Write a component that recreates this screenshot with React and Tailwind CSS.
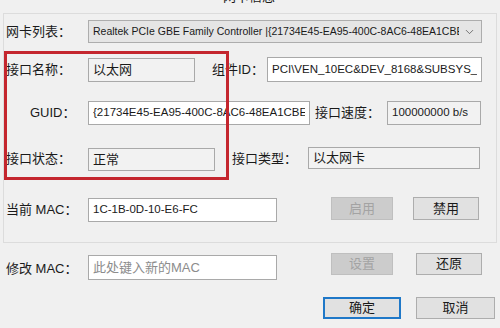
import { ChevronDown } from "lucide-react";

const font = { fontFamily: '"Liberation Sans", "Noto Sans CJK SC", sans-serif' };

function Label({ children, className = "" }) {
  return (
    <div className={`flex shrink-0 items-center h-full text-[13px] text-[#1a1a1a] whitespace-nowrap ${className}`}>
      {children}
    </div>
  );
}

function Field({ children, className = "", gray = false, muted = false }) {
  return (
    <div
      className={`flex shrink-0 items-center px-[4px] border border-[#a9a9a9] overflow-hidden ${
        gray ? "bg-[#f2f2f2]" : "bg-white"
      } ${muted ? "text-[#8c8c8c]" : "text-[#1a1a1a]"} ${className}`}
    >
      <span className="block min-w-0 overflow-hidden whitespace-nowrap">{children}</span>
    </div>
  );
}

function Button({ children, className = "", disabled = false, primary = false }) {
  return (
    <div
      className={`flex shrink-0 items-center justify-center text-[13px] ${
        disabled
          ? "bg-[#cccccc] border border-[#bfbfbf] text-[#a3a3a3]"
          : primary
          ? "bg-[#e1e1e1] border-2 border-[#1f78c8] text-[#1a1a1a]"
          : "bg-[#e1e1e1] border border-[#adadad] text-[#1a1a1a]"
      } ${className}`}
    >
      {children}
    </div>
  );
}

export default function App() {
  return (
    <div className="relative w-[500px] h-[328px] bg-[#f0f0f0] overflow-hidden" style={font}>
      {/* group box */}
      <div className="relative mt-[13px] ml-[3px] w-[494px] h-[230px] border border-[#dcdcdc]">
        <div className="absolute left-[219px] top-[-27px] text-[13px] text-[#1a1a1a]">网卡信息</div>

        {/* 网卡列表 */}
        <div className="flex h-[23px] mt-[6px]">
          <Label className="w-[84px] pl-[2px]">网卡列表：</Label>
          <div className="relative flex shrink-0 items-center w-[394px] h-full pl-[4px] pr-[22px] bg-[#e5e5e5] border border-[#adadad]">
            <span className="block min-w-0 overflow-hidden whitespace-nowrap text-[10.5px] text-[#1a1a1a]">
              Realtek PCIe GBE Family Controller |{"{"}21734E45-EA95-400C-8AC6-48EA1CBE{"}"}
            </span>
            <ChevronDown size={13} strokeWidth={1.3} className="absolute right-[5px] top-1/2 -translate-y-1/2 text-[#444]" />
          </div>
        </div>

        {/* 接口名称 / 组件ID */}
        <div className="flex h-[25px] mt-[14px]">
          <Label className="w-[84px] pl-[2px]">接口名称：</Label>
          <Field gray className="w-[107px] h-[24px] self-end text-[13px]">以太网</Field>
          <Label className="ml-[17px] w-[55px]">组件ID：</Label>
          <Field className="w-[215px] h-full text-[11.5px]">PCI\VEN_10EC&amp;DEV_8168&amp;SUBSYS_E0001458&amp;REV_06</Field>
        </div>

        {/* GUID / 接口速度 */}
        <div className="flex h-[24px] mt-[19px]">
          <Label className="w-[84px] pl-[26px]">GUID：</Label>
          <Field className="w-[222px] h-full text-[11.5px]">{"{"}21734E45-EA95-400C-8AC6-48EA1CBEF{"}"}</Field>
          <Label className="ml-[5px] w-[72px]">接口速度：</Label>
          <Field gray className="w-[94px] h-full text-[11.5px]">100000000 b/s</Field>
        </div>

        {/* 接口状态 / 接口类型 */}
        <div className="flex h-[24px] mt-[22px]">
          <Label className="w-[84px] pl-[2px]">接口状态：</Label>
          <Field gray className="w-[127px] h-[23px] self-end text-[13px]">正常</Field>
          <Label className="ml-[17px] w-[76px]">接口类型：</Label>
          <Field gray className="w-[172px] h-[22px] text-[13px]">以太网卡</Field>
        </div>

        {/* 当前 MAC */}
        <div className="flex h-[25px] mt-[26px]">
          <Label className="w-[84px] pl-[2px]">当前 MAC：</Label>
          <Field className="w-[189px] h-[24px] self-end text-[11.5px]">1C-1B-0D-10-E6-FC</Field>
          <Button disabled className="ml-[54px] w-[62px] h-[23px]">启用</Button>
          <Button className="ml-[20px] w-[66px] h-[23px]">禁用</Button>
        </div>
      </div>

      {/* 修改 MAC */}
      <div className="flex h-[27px] mt-[10px]">
        <Label className="w-[88px] pl-[6px] pt-[4px]">修改 MAC：</Label>
        <Field muted className="w-[189px] h-[25px] self-end text-[13px]">此处键入新的MAC</Field>
        <Button disabled className="ml-[54px] w-[62px] h-[22px]">设置</Button>
        <Button className="ml-[23px] w-[66px] h-[22px]">还原</Button>
      </div>

      {/* 确定 / 取消 */}
      <div className="flex h-[22px] mt-[17px]">
        <Button primary className="ml-[323px] w-[78px] h-full">确定</Button>
        <Button className="ml-[15px] w-[79px] h-full">取消</Button>
      </div>

      {/* red annotation */}
      <div className="absolute left-[4px] top-[51px] w-[225px] h-[129px] border-[3px] border-[#c4262e] pointer-events-none" />
    </div>
  );
}
